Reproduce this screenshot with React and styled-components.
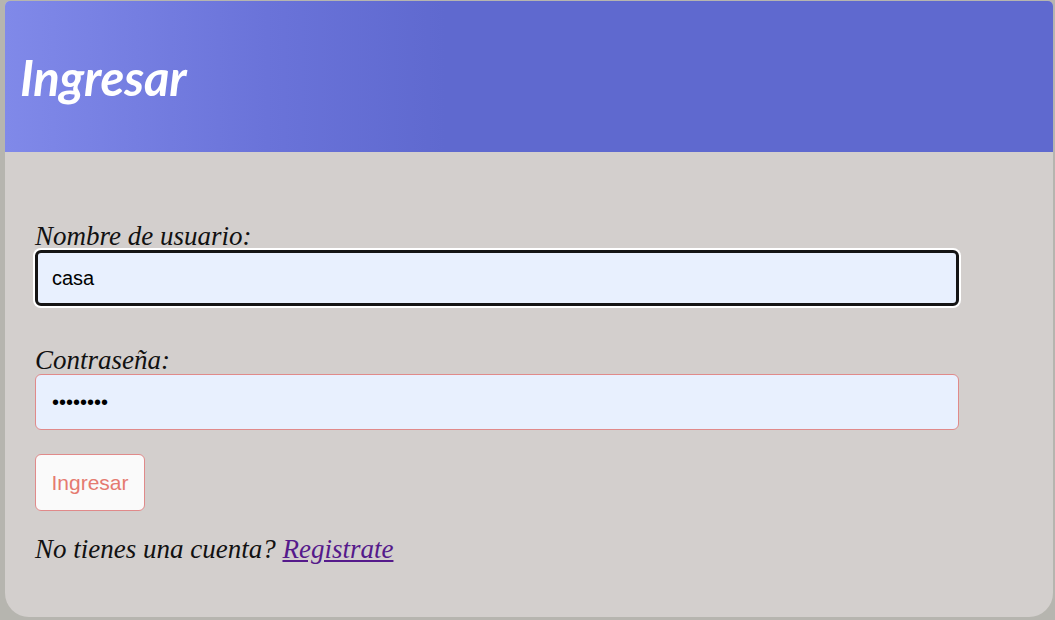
import React from "react";
import styled, { createGlobalStyle } from "styled-components";

const Global = createGlobalStyle`
  html, body { margin: 0; padding: 0; background: #b6b5af; }
  body { width: 1055px; height: 620px; overflow: hidden; }
`;

const Card = styled.div`
  margin: 1px 0 0 5px;
  width: 1048px;
  height: 616px;
  background: #d3cfcd;
  border-radius: 5px 5px 24px 24px;
  overflow: hidden;
  display: flex;
  flex-direction: column;
`;

const Header = styled.header`
  height: 151px;
  flex: none;
  display: flex;
  align-items: center;
  padding-left: 15px;
  background: linear-gradient(to right, #8089e9 0%, #6a73d9 25%, #5f69cf 42%, #5f69cf 100%);
`;

const Title = styled.h1`
  margin: 0;
  font-family: Lato, "Open Sans", sans-serif;
  font-style: italic;
  font-weight: 700;
  font-size: 49px;
  color: #fff;
  letter-spacing: -0.2px;
`;

const Form = styled.form`
  padding: 70px 0 0 30px;
  display: flex;
  flex-direction: column;
  align-items: flex-start;
`;

const Label = styled.label`
  display: block;
  font-family: "Liberation Serif", "DejaVu Serif", serif;
  font-style: italic;
  font-size: 27px;
  line-height: 28px;
  color: #111;
`;

const Input = styled.input`
  box-sizing: border-box;
  width: 924px;
  height: 56px;
  margin-bottom: ${(p) => (p.$last ? "24px" : "40px")};
  font-family: "Liberation Sans", Arial, sans-serif;
  font-size: 20px;
  color: #000;
  background: #e8f0fe;
  border: ${(p) => (p.$focused ? "3px solid #141414" : "1px solid #e08a8a")};
  padding: 0 0 0 ${(p) => (p.$focused ? "14px" : "16px")};
  border-radius: 6px;
  box-shadow: ${(p) => (p.$focused ? "0 0 0 2px #ffffff" : "none")};
  outline: none;
`;

const Button = styled.button`
  box-sizing: border-box;
  width: 110px;
  height: 57px;
  padding: 0;
  font-family: "Liberation Sans", Arial, sans-serif;
  font-size: 21px;
  color: #e57a70;
  background: #fafafa;
  border: 1px solid #e08a8a;
  border-radius: 6px;
  margin-bottom: 22px;
`;

const Footer = styled.p`
  margin: 0;
  font-family: "Liberation Serif", "DejaVu Serif", serif;
  font-style: italic;
  font-size: 27px;
  line-height: 32px;
  color: #111;
`;

const Link = styled.a`
  color: #551a8b;
  text-decoration: underline;
`;

export default function App() {
  return (
    <>
      <Global />
      <Card>
        <Header>
          <Title>Ingresar</Title>
        </Header>
        <Form onSubmit={(e) => e.preventDefault()}>
          <Label htmlFor="user">Nombre de usuario:</Label>
          <Input id="user" $focused type="text" defaultValue="casa" readOnly />
          <Label htmlFor="pass">Contraseña:</Label>
          <Input id="pass" $last type="password" defaultValue="12345678" readOnly />
          <Button type="submit">Ingresar</Button>
          <Footer>
            No tienes una cuenta? <Link href="#">Registrate</Link>
          </Footer>
        </Form>
      </Card>
    </>
  );
}
